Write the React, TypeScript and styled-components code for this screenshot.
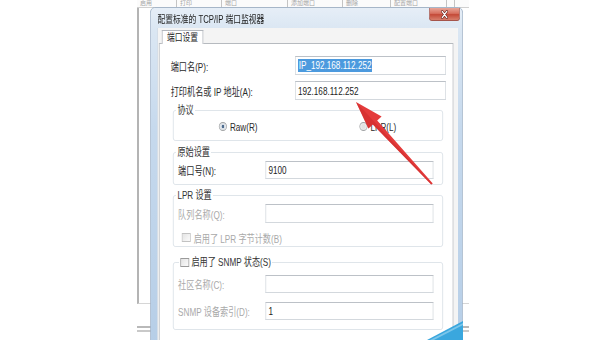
import React from "react";
import styled, { createGlobalStyle } from "styled-components";

const Global = createGlobalStyle`
  html, body { margin: 0; padding: 0; background: #ffffff; }
  body {
    width: 600px; height: 340px; overflow: hidden;
    font-family: "Liberation Sans", "Noto Sans CJK SC", sans-serif;
  }
  * { box-sizing: border-box; }
`;

const Stage = styled.div`
  position: relative;
  width: 600px;
  height: 340px;
  overflow: hidden;
  background: #ffffff;
`;

/* ---------- window behind the dialog ---------- */
const BackWindow = styled.div`
  position: absolute;
  left: 137px;
  top: 0;
  width: 332px;
  height: 340px;
  display: flex;
  flex-direction: column;
`;

const BackHeader = styled.div`
  height: 8px;
  display: flex;
  overflow: hidden;
  background: #fbfbfb;
  border-bottom: 1px solid #d0d0d0;
`;

const BackCell = styled.div<{ $w: number }>`
  width: ${(p) => p.$w}px;
  flex: none;
  border-right: 1px solid #c4c4c4;
  font-size: 6px;
  line-height: 7px;
  color: #a6a6a6;
  padding-left: 3px;
  white-space: nowrap;
  overflow: hidden;
`;

const BackBody = styled.div`
  height: 296px;
  border-left: 2px solid #b4b4b4;
  border-bottom: 1px solid #d6d6d6;
  background: #ffffff;
`;

const BackFooter = styled.div`
  margin-top: 22px;
  height: 6px;
  border-top: 2px solid #b9b9b9;
  border-bottom: 2px solid #c9c9c9;
`;

/* ---------- dialog ---------- */
const Dialog = styled.div`
  position: absolute;
  left: 150px;
  top: 7px;
  width: 423px;
  height: 345px;
  transform: scaleX(0.74);
  transform-origin: 0 0;
  display: flex;
  flex-direction: column;
  border: 1px solid #9fb2c6;
  border-radius: 6px 6px 0 0;
  background: linear-gradient(180deg, #e6eef7 0px, #dbe7f3 20px, #c6d9ed 120px, #b6cee7 340px);
`;

const TitleBar = styled.div`
  height: 20px;
  flex: none;
  display: flex;
  justify-content: space-between;
  padding: 0 3px 0 9px;
`;

const Title = styled.div`
  align-self: center;
  font-size: 10.5px;
  color: #1c1c1c;
  white-space: nowrap;
  padding-top: 1px;
`;

const CloseBtn = styled.div`
  width: 42px;
  height: 13px;
  border: 1px solid #a5544a;
  border-top: none;
  border-radius: 0 0 4px 4px;
  background: linear-gradient(180deg, #e9a597 0%, #d7705f 45%, #c44a38 55%, #d77f6c 100%);
  display: flex;
  align-items: center;
  justify-content: center;
`;

const ClientArea = styled.div`
  flex: 1;
  display: flex;
  flex-direction: column;
  margin: 0 6px 0 8px;
  padding: 0 6px 0 2px;
  background: #f4f4f4;
  border-left: 1px solid #a9bfd6;
`;

const TabStrip = styled.div`
  height: 15px;
  flex: none;
  display: flex;
  align-items: flex-end;
  padding-left: 4px;
`;

const Tab = styled.div`
  height: 14px;
  width: 56px;
  position: relative;
  z-index: 1;
  margin-bottom: -1px;
  background: #ffffff;
  border: 1px solid #b2b6bc;
  border-bottom: none;
  font-size: 10.5px;
  line-height: 13px;
  color: #262626;
  text-align: center;
  white-space: nowrap;
`;

const Panel = styled.div`
  flex: 1;
  background: #ffffff;
  border: 1px solid #b6babf;
  padding: 12px 10px 0 15px;
  display: flex;
  flex-direction: column;
`;

const FormRow = styled.div<{ $top: number }>`
  display: grid;
  grid-template-columns: 168px 204px;
  align-items: center;
  height: 19px;
  margin-top: ${(p) => p.$top}px;
`;

const Label = styled.div<{ $disabled?: boolean }>`
  font-size: 11px;
  color: ${(p) => (p.$disabled ? "#a9a9a9" : "#2a2a2a")};
  white-space: nowrap;
`;

const TextBox = styled.div<{ $h?: number }>`
  height: ${(p) => p.$h ?? 19}px;
  border: 1px solid #d3d8dd;
  border-top-color: #bcc1c7;
  background: #ffffff;
  font-size: 11px;
  color: #222222;
  padding-left: 3px;
  display: flex;
  align-items: center;
  white-space: nowrap;
`;

const Selected = styled.span`
  background: #4c9ade;
  color: #ffffff;
  padding: 0 1px;
  line-height: 13px;
`;

const Group = styled.fieldset<{ $top: number; $bottom: number }>`
  margin: ${(p) => p.$top}px 3px 0 3px;
  padding: 0 13px ${(p) => p.$bottom}px 6px;
  border: 1px solid #dae1e7;
  border-radius: 3px;
  min-width: 0;
`;

const Legend = styled.legend<{ $shift?: number }>`
  padding: 0 2px;
  margin-left: ${(p) => p.$shift ?? -3}px;
  font-size: 11px;
  line-height: 15px;
  color: #333333;
  display: flex;
  align-items: center;
  gap: 3px;
  white-space: nowrap;
`;

const GroupRow = styled.div<{ $top: number; $h: number }>`
  display: grid;
  grid-template-columns: 118px 227px;
  align-items: center;
  height: ${(p) => p.$h}px;
  margin-top: ${(p) => p.$top}px;
`;

const RadioRow = styled.div`
  display: grid;
  grid-template-columns: 190px auto;
  align-items: center;
  height: 15px;
  margin-top: 1px;
  padding-left: 55px;
`;

const Choice = styled.div<{ $disabled?: boolean }>`
  display: flex;
  align-items: center;
  gap: 4px;
  font-size: 11px;
  color: ${(p) => (p.$disabled ? "#a9a9a9" : "#2a2a2a")};
  white-space: nowrap;
`;

const RadioDot = styled.span<{ $on?: boolean }>`
  width: 11px;
  height: 9px;
  flex: none;
  border-radius: 50%;
  border: 1px solid #a2a4a6;
  background: ${(p) =>
    p.$on
      ? "radial-gradient(circle, #4e6c8e 0 28%, #d6dde5 34%, #f4f4f4 100%)"
      : "radial-gradient(circle, #e2e2e2 0 30%, #f7f7f7 100%)"};
`;

const CheckRow = styled.div`
  display: flex;
  align-items: center;
  height: 15px;
  margin-top: 7px;
  padding-left: 5px;
`;

const CheckBox = styled.span<{ $disabled?: boolean }>`
  width: 12px;
  height: 9px;
  flex: none;
  border: 1px solid ${(p) => (p.$disabled ? "#c2c2c2" : "#9a9a9a")};
  background: linear-gradient(135deg, #e4e4e4, #fbfbfb);
`;

/* ---------- overlay drawings ---------- */
const Overlay = styled.svg`
  position: absolute;
  left: 0;
  top: 0;
  pointer-events: none;
`;

export default function App() {
  return (
    <>
      <Global />
      <Stage>
        <BackWindow>
          <BackHeader>
            <BackCell $w={40}>启用</BackCell>
            <BackCell $w={45}>打印</BackCell>
            <BackCell $w={66}>端口</BackCell>
            <BackCell $w={55}>添加端口</BackCell>
            <BackCell $w={48}>删除</BackCell>
            <BackCell $w={56}>配置端口</BackCell>
            <BackCell $w={8} />
          </BackHeader>
          <BackBody />
          <BackFooter />
        </BackWindow>

        <Dialog>
          <TitleBar>
            <Title>配置标准的 TCP/IP 端口监视器</Title>
            <CloseBtn>
              <svg width="12" height="9" viewBox="0 0 12 9">
                <path d="M3 1.5 L9 7.5 M9 1.5 L3 7.5" stroke="#6b2a22" strokeWidth="3" strokeLinecap="round" />
                <path d="M3 1.5 L9 7.5 M9 1.5 L3 7.5" stroke="#ffffff" strokeWidth="1.6" strokeLinecap="round" />
              </svg>
            </CloseBtn>
          </TitleBar>
          <ClientArea>
            <TabStrip>
              <Tab>端口设置</Tab>
            </TabStrip>
            <Panel>
              <FormRow $top={0}>
                <Label>端口名(P):</Label>
                <TextBox>
                  <Selected>IP_192.168.112.252</Selected>
                </TextBox>
              </FormRow>
              <FormRow $top={6}>
                <Label>打印机名或 IP 地址(A):</Label>
                <TextBox>192.168.112.252</TextBox>
              </FormRow>

              <Group $top={3} $bottom={6}>
                <Legend>协议</Legend>
                <RadioRow>
                  <Choice>
                    <RadioDot $on />
                    Raw(R)
                  </Choice>
                  <Choice>
                    <RadioDot />
                    LPR(L)
                  </Choice>
                </RadioRow>
              </Group>

              <Group $top={4} $bottom={5}>
                <Legend>原始设置</Legend>
                <GroupRow $top={1} $h={18}>
                  <Label>端口号(N):</Label>
                  <TextBox $h={18}>9100</TextBox>
                </GroupRow>
              </Group>

              <Group $top={3} $bottom={1}>
                <Legend>LPR 设置</Legend>
                <GroupRow $top={1} $h={19}>
                  <Label $disabled>队列名称(Q):</Label>
                  <TextBox />
                </GroupRow>
                <CheckRow>
                  <Choice $disabled>
                    <CheckBox $disabled />
                    启用了 LPR 字节计数(B)
                  </Choice>
                </CheckRow>
              </Group>

              <Group $top={8} $bottom={9}>
                <Legend $shift={1}>
                  <CheckBox />
                  启用了 SNMP 状态(S)
                </Legend>
                <GroupRow $top={5} $h={18}>
                  <Label $disabled>社区名称(C):</Label>
                  <TextBox $h={18} />
                </GroupRow>
                <GroupRow $top={9} $h={18}>
                  <Label $disabled>SNMP 设备索引(D):</Label>
                  <TextBox $h={18}>1</TextBox>
                </GroupRow>
              </Group>
            </Panel>
          </ClientArea>
        </Dialog>

        <Overlay width="600" height="340" viewBox="0 0 600 340">
          <polygon points="427,340 463,321 463,340" fill="#3aa7de" />
          <polygon points="430,340 463,323 463,325 434,340" fill="#7cc6ea" />
          <polygon
            points="356,102 381.6,116.4 377.2,120.5 432.8,183.4 431.2,184.6 372.8,124.5 368.4,128.6"
            fill="#e43b3b"
          />
          <polygon points="356,102 368.4,128.6 372.8,124.5 431.2,184.6 432,184 375,122.5" fill="#c92a2a" opacity="0.5" />
        </Overlay>
      </Stage>
    </>
  );
}
